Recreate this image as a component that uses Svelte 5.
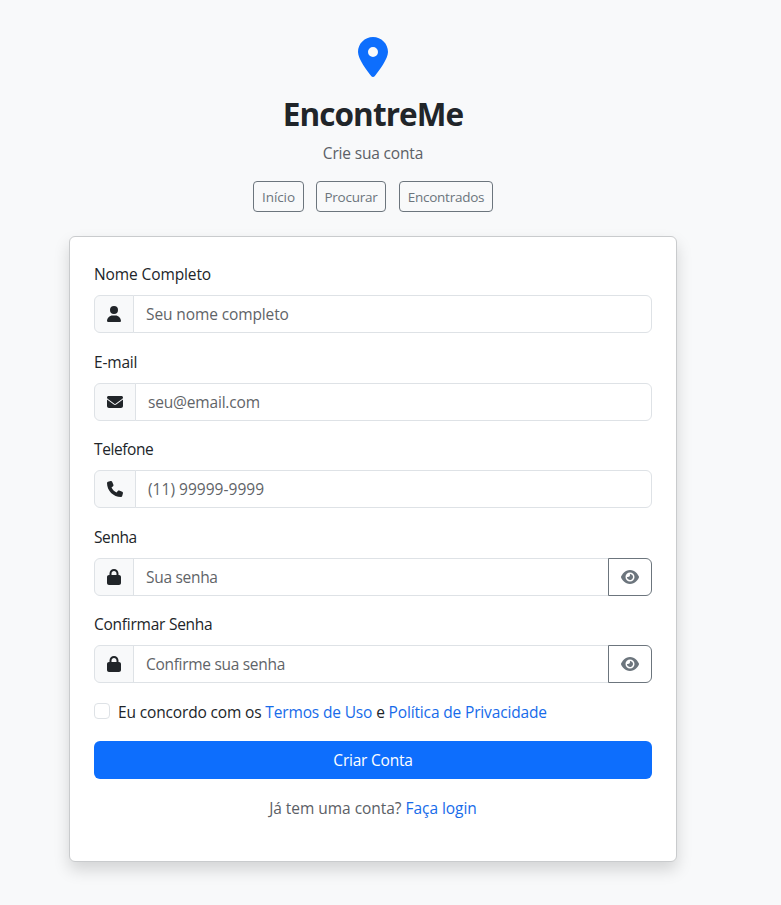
<script>
  const icons = {
    pin: { w: 384, d: 'M215.7 499.2C267 435 384 279.4 384 192C384 86 298 0 192 0S0 86 0 192c0 87.4 117 243 168.3 307.2c12.3 15.3 35.1 15.3 47.4 0zM192 128a64 64 0 1 1 0 128 64 64 0 1 1 0-128z' },
    user: { w: 448, d: 'M224 256A128 128 0 1 0 224 0a128 128 0 1 0 0 256zm-45.7 48C79.8 304 0 383.8 0 482.3C0 498.7 13.3 512 29.7 512H418.3c16.4 0 29.7-13.3 29.7-29.7C448 383.8 368.2 304 269.7 304H178.3z' },
    envelope: { w: 512, d: 'M48 64C21.5 64 0 85.5 0 112c0 15.1 7.1 29.3 19.2 38.4L236.8 313.6c11.4 8.5 27 8.5 38.4 0L492.8 150.4c12.1-9.1 19.2-23.3 19.2-38.4c0-26.5-21.5-48-48-48H48zM0 176V384c0 35.3 28.7 64 64 64H448c35.3 0 64-28.7 64-64V176L294.4 339.2c-22.8 17.1-54 17.1-76.8 0L0 176z' },
    phone: { w: 512, d: 'M164.9 24.6c-7.7-18.6-28-28.5-47.4-23.2l-88 24C12.1 30.2 0 46 0 64C0 311.4 200.6 512 448 512c18 0 33.8-12.1 38.6-29.5l24-88c5.3-19.4-4.6-39.7-23.2-47.4l-96-40c-16.3-6.8-35.2-2.1-46.3 11.6L304.7 368C234.3 334.7 177.3 277.7 144 207.3L193.3 167c13.7-11.2 18.4-30 11.6-46.3l-40-96z' },
    lock: { w: 448, d: 'M144 144v48H304V144c0-44.2-35.8-80-80-80s-80 35.8-80 80zM80 192V144C80 64.5 144.5 0 224 0s144 64.5 144 144v48h16c35.3 0 64 28.7 64 64V448c0 35.3-28.7 64-64 64H64c-35.3 0-64-28.7-64-64V256c0-35.3 28.7-64 64-64H80z' },
    eye: { w: 576, d: 'M288 32c-80.8 0-145.5 36.8-192.6 80.6C48.6 156 17.3 208 2.5 243.7c-3.3 7.9-3.3 16.7 0 24.6C17.3 304 48.6 356 95.4 399.4C142.5 443.2 207.2 480 288 480s145.5-36.8 192.6-80.6c46.8-43.5 78.1-95.4 93-131.1c3.3-7.9 3.3-16.7 0-24.6c-14.9-35.7-46.2-87.7-93-131.1C433.5 68.8 368.8 32 288 32zM144 256a144 144 0 1 1 288 0 144 144 0 1 1 -288 0zm144-64c0 35.3-28.7 64-64 64c-7.1 0-13.9-1.2-20.3-3.3c-5.5-1.8-11.9 1.6-11.7 7.4c.3 6.9 1.3 13.8 3.2 20.7c13.7 51.2 66.4 81.6 117.6 67.9s81.6-66.4 67.9-117.6c-11.1-41.5-47.8-69.4-88.6-71.1c-5.8-.2-9.2 6.1-7.4 11.7c2.1 6.4 3.3 13.2 3.3 20.3z' }
  };

  const fields = [
    { id: 'nome', label: 'Nome Completo', icon: 'user', type: 'text', placeholder: 'Seu nome completo' },
    { id: 'email', label: 'E-mail', icon: 'envelope', type: 'email', placeholder: 'seu@email.com' },
    { id: 'telefone', label: 'Telefone', icon: 'phone', type: 'tel', placeholder: '(11) 99999-9999' },
    { id: 'senha', label: 'Senha', icon: 'lock', type: 'password', placeholder: 'Sua senha' },
    { id: 'confirmar', label: 'Confirmar Senha', icon: 'lock', type: 'password', placeholder: 'Confirme sua senha' }
  ];

  let visible = $state({});
</script>

{#snippet icon(name, size)}
  <svg viewBox="0 0 {icons[name].w} 512" width={(icons[name].w / 512) * size} height={size} fill="currentColor" aria-hidden="true">
    <path d={icons[name].d} />
  </svg>
{/snippet}

<main class="page">
  <header>
    <div class="logo">{@render icon('pin', 40)}</div>
    <h1>EncontreMe</h1>
    <p class="subtitle">Crie sua conta</p>
    <nav>
      <a class="inicio" href="#inicio">Início</a>
      <a class="procurar" href="#procurar">Procurar</a>
      <a class="encontrados" href="#encontrados">Encontrados</a>
    </nav>
  </header>

  <form class="card" onsubmit={(e) => e.preventDefault()}>
    {#each fields as f}
      <div class="field {f.id}">
        <label for={f.id}>{f.label}</label>
        <div class="group">
          <span class="addon">{@render icon(f.icon, 16)}</span>
          <input id={f.id} type={visible[f.id] ? 'text' : f.type} placeholder={f.placeholder} />
          {#if f.type === 'password'}
            <button type="button" class="toggle" aria-label="Mostrar senha" onclick={() => (visible[f.id] = !visible[f.id])}>
              {@render icon('eye', 16)}
            </button>
          {/if}
        </div>
      </div>
    {/each}

    <div class="check">
      <input type="checkbox" id="termos" />
      <label for="termos">Eu concordo com os <a href="#termos-de-uso">Termos de Uso</a> e <a href="#privacidade">Política de Privacidade</a></label>
    </div>

    <button type="submit" class="submit">Criar Conta</button>
    <p class="login">Já tem uma conta? <a href="#login">Faça login</a></p>
  </form>
</main>

<style>
  :global(body) {
    background: #f8f9fa;
  }
  .page,
  .page * {
    box-sizing: border-box;
  }
  .page {
    width: 746px;
    min-height: 905px;
    padding-top: 37px;
    display: flex;
    flex-direction: column;
    align-items: center;
    color: #212529;
    font: 15.5px/24px 'Open Sans', 'Noto Sans', sans-serif;
    letter-spacing: -0.25px;
  }
  svg {
    display: block;
    flex: none;
  }
  header {
    display: flex;
    flex-direction: column;
    align-items: center;
  }
  .logo {
    color: #0d6efd;
  }
  h1 {
    margin: 17px 0 8px;
    font-size: 31.5px;
    line-height: 39px;
    font-weight: 700;
    letter-spacing: -0.9px;
  }
  p {
    margin: 0;
  }
  .subtitle {
    color: #5b6066;
    letter-spacing: -0.17px;
  }
  nav {
    display: flex;
    gap: 12px;
    margin-top: 16px;
  }
  nav a {
    height: 31px;
    display: flex;
    align-items: center;
    justify-content: center;
    padding-top: 1px;
    border: 1px solid #6c757d;
    border-radius: 4px;
    color: #6c757d;
    font-size: 13.5px;
    line-height: 21px;
    white-space: nowrap;
  }
  .inicio {
    width: 51px;
    letter-spacing: -0.1px;
  }
  .procurar {
    width: 70px;
  }
  .encontrados {
    width: 94px;
    margin-left: 1px;
  }
  a {
    color: #176bea;
    text-decoration: none;
  }
  .card {
    width: 608px;
    height: 626px;
    margin-top: 24px;
    padding: 25px 24px;
    background: #fff;
    border: 1px solid #c9cbcd;
    border-radius: 6px;
    box-shadow: 0 8px 16px rgba(0, 0, 0, 0.15);
  }
  .field {
    margin-bottom: 16.6px;
  }
  .field label {
    display: block;
    margin-bottom: 9px;
  }
  .nome {
    letter-spacing: -0.11px;
  }
  .email {
    letter-spacing: -0.18px;
  }
  .telefone,
  .senha {
    letter-spacing: -0.4px;
  }
  .telefone input {
    letter-spacing: 0.03px;
  }
  .senha input,
  .confirmar input {
    letter-spacing: -0.3px;
  }
  .group {
    height: 38px;
    display: flex;
  }
  .addon {
    display: flex;
    align-items: center;
    padding: 0 12px;
    background: #f8f9fa;
    border: 1px solid #dee2e6;
    border-radius: 6px 0 0 6px;
  }
  .group input {
    flex: 1;
    min-width: 0;
    margin-left: -1px;
    padding: 0 12px;
    border: 1px solid #dee2e6;
    border-radius: 0 6px 6px 0;
    background: #fff;
    color: inherit;
    font: inherit;
    outline: none;
  }
  .nome input,
  .email input {
    letter-spacing: inherit;
  }
  .group input:not(:last-child) {
    border-radius: 0;
  }
  .group input::placeholder {
    color: #5f6468;
    opacity: 1;
  }
  .toggle {
    width: 44px;
    margin-left: -1px;
    padding: 0;
    display: flex;
    align-items: center;
    justify-content: center;
    background: #fff;
    border: 1px solid #6c757d;
    border-radius: 0 6px 6px 0;
    color: #6c757d;
    z-index: 1;
  }
  .check {
    display: flex;
    gap: 8px;
    align-items: flex-start;
    letter-spacing: -0.15px;
  }
  .check input {
    appearance: none;
    width: 16px;
    height: 16px;
    margin: 3px 0 0;
    border: 1px solid #dee2e6;
    border-radius: 4px;
    background: #fff;
  }
  .submit {
    display: block;
    width: 100%;
    height: 38px;
    margin-top: 17px;
    padding: 0;
    border: 0;
    border-radius: 6px;
    background: #0d6efd;
    color: #fff;
    font: inherit;
    letter-spacing: -0.22px;
  }
  .login {
    margin-top: 17px;
    text-align: center;
    color: #5b6066;
    letter-spacing: -0.04px;
  }
</style>
